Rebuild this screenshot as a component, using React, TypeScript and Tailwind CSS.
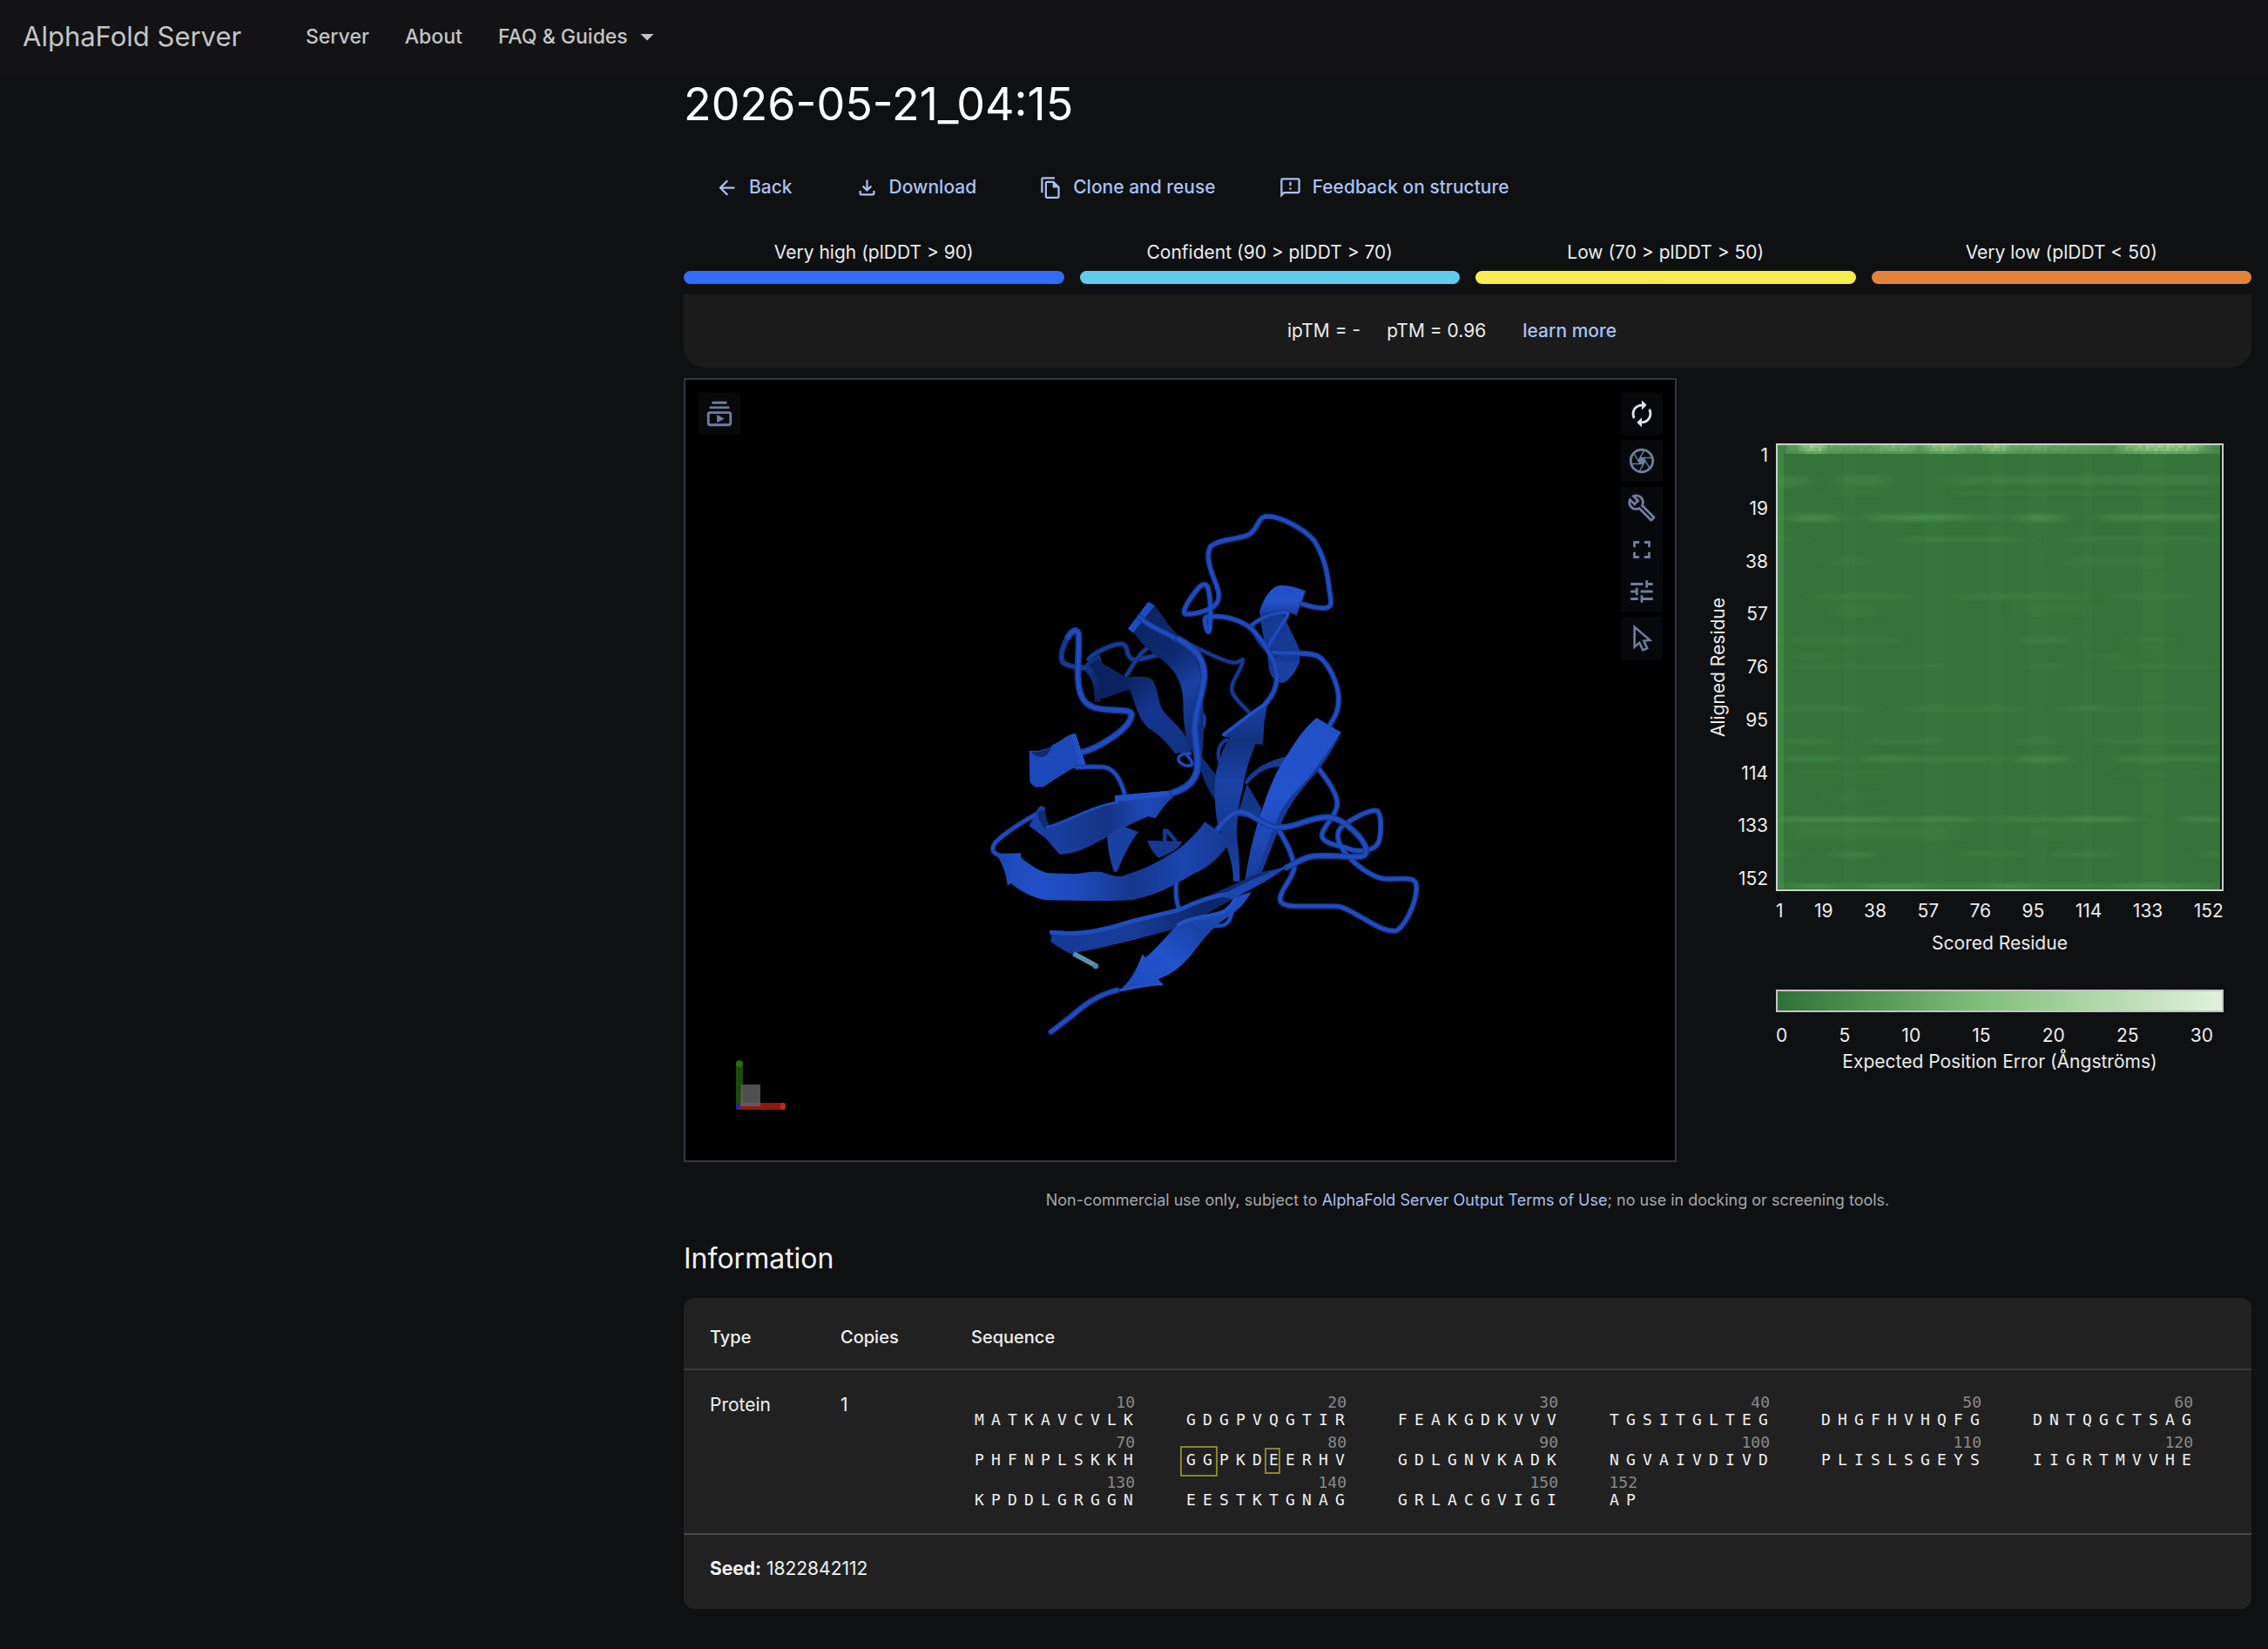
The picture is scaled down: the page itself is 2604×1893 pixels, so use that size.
import { type ReactNode } from "react";
import {
  MdArrowBack,
  MdArrowDropDown,
  MdAutorenew,
  MdFullscreen,
  MdOutlineBuild,
  MdOutlineCamera,
  MdOutlineFeedback,
  MdOutlineFileCopy,
  MdOutlineFileDownload,
  MdOutlineSubscriptions,
  MdTune,
} from "react-icons/md";

function Header() {
  return (
    <header className="flex h-[90px] items-center bg-[#131315] pl-[26px] pb-[6px] text-[#c4c4c4]">
      <a href="#home" className="w-[325px] text-[31px] leading-10">AlphaFold Server</a>
      <nav className="flex items-center gap-[41px] text-[23px] font-medium leading-8">
        <a href="#server">Server</a>
        <a href="#about">About</a>
        <button type="button" className="flex items-center">
          FAQ &amp; Guides
          <MdArrowDropDown className="ml-1 size-9" aria-hidden />
        </button>
      </nav>
    </header>
  );
}

function Action({ icon, children }: { icon: ReactNode; children: ReactNode }) {
  return (
    <button type="button" className="flex items-center gap-3 text-[21px] font-medium leading-7 text-[#a9c1f1]">
      {icon}
      {children}
    </button>
  );
}

function Actions() {
  return (
    <div className="mt-8 flex h-[66px] items-center gap-[72px] pl-9">
      <Action icon={<MdArrowBack className="size-[27px]" />}>Back</Action>
      <Action icon={<MdOutlineFileDownload className="size-[27px]" />}>Download</Action>
      <Action icon={<MdOutlineFileCopy className="size-[27px]" />}>Clone and reuse</Action>
      <Action icon={<MdOutlineFeedback className="size-[27px]" />}>Feedback on structure</Action>
    </div>
  );
}

const LEVELS = [
  { label: "Very high (plDDT > 90)", bar: "bg-[#336cf7]" },
  { label: "Confident (90 > plDDT > 70)", bar: "bg-[#61cbee]" },
  { label: "Low (70 > plDDT > 50)", bar: "bg-[#f6ec50]" },
  { label: "Very low (plDDT < 50)", bar: "bg-[#e28438]" },
];

function Legend() {
  return (
    <ul className="mt-[26px] grid grid-cols-4 gap-[18px]">
      {LEVELS.map((l) => (
        <li key={l.label} className="text-center text-[21px] leading-8 text-[#ececec]">
          {l.label}
          <div className={"mt-[5px] h-[15px] rounded-full " + l.bar} />
        </li>
      ))}
    </ul>
  );
}

function CursorIcon() {
  return (
    <svg viewBox="0 0 24 24" className="size-[34px]" fill="none" stroke="currentColor" strokeWidth="1.8" aria-hidden>
      <path d="M6.1 2.6v16.2l4-3.4 2.8 6 3.5-1.6-2.8-5.8 5-.7z" />
    </svg>
  );
}

function Tool({ label, active, children }: { label: string; active?: boolean; children: ReactNode }) {
  return (
    <button
      type="button"
      aria-label={label}
      className={"flex size-12 items-center justify-center bg-[#07080c] " + (active ? "text-[#dfe2e8]" : "text-[#6d7e9f]")}
    >
      {children}
    </button>
  );
}

function Tube({ d, w = 20, dark = false }: { d: string; w?: number; dark?: boolean }) {
  return (
    <g fill="none" strokeLinecap="round" strokeLinejoin="round">
      <path d={d} stroke={dark ? "#0e2a72" : "#163892"} strokeWidth={w} />
      <path d={d} stroke={dark ? "#143588" : "#1b45ae"} strokeWidth={w * 0.72} />
      <path d={d} stroke={dark ? "#173b94" : "#204dc0"} strokeWidth={w * 0.4} />
    </g>
  );
}

function Protein() {
  return (
    <svg viewBox="787 436 1136 896" className="block h-auto w-full" role="img" aria-label="Predicted structure">
      <defs>
        <linearGradient id="g1" x1="0" y1="0" x2="0.3" y2="1">
          <stop offset="0" stopColor="#0b2360" />
          <stop offset="0.45" stopColor="#0d2a70" />
          <stop offset="0.7" stopColor="#1940a2" />
          <stop offset="1" stopColor="#102e7c" />
        </linearGradient>
        <linearGradient id="g2" x1="0" y1="0" x2="1" y2="1">
          <stop offset="0" stopColor="#16398f" />
          <stop offset="0.3" stopColor="#0b215c" />
          <stop offset="0.6" stopColor="#143690" />
          <stop offset="1" stopColor="#12317f" />
        </linearGradient>
        <linearGradient id="g3" x1="0" y1="0" x2="1" y2="0">
          <stop offset="0" stopColor="#1c48b6" />
          <stop offset="0.18" stopColor="#2150c8" />
          <stop offset="0.35" stopColor="#1d4abb" />
          <stop offset="0.58" stopColor="#15378e" />
          <stop offset="0.8" stopColor="#1b45ae" />
          <stop offset="1" stopColor="#15388f" />
        </linearGradient>
        <linearGradient id="g4" x1="0" y1="0" x2="0" y2="1">
          <stop offset="0" stopColor="#1a43a8" />
          <stop offset="0.22" stopColor="#12317f" />
          <stop offset="0.45" stopColor="#1a42a6" />
          <stop offset="0.75" stopColor="#15378d" />
          <stop offset="1" stopColor="#1b44aa" />
        </linearGradient>
        <linearGradient id="g5" x1="0" y1="0" x2="0" y2="1">
          <stop offset="0" stopColor="#2150c8" />
          <stop offset="0.5" stopColor="#2352cd" />
          <stop offset="1" stopColor="#183c9a" />
        </linearGradient>
        <linearGradient id="g6" x1="0" y1="0" x2="1" y2="0">
          <stop offset="0" stopColor="#1a43aa" />
          <stop offset="0.55" stopColor="#143486" />
          <stop offset="0.8" stopColor="#1d49b8" />
          <stop offset="1" stopColor="#1a42a6" />
        </linearGradient>
        <linearGradient id="g7" x1="0" y1="1" x2="1" y2="0">
          <stop offset="0" stopColor="#1c49b8" />
          <stop offset="0.35" stopColor="#2253cd" />
          <stop offset="0.6" stopColor="#1a43a8" />
          <stop offset="1" stopColor="#2150c4" />
        </linearGradient>
        <linearGradient id="g8" x1="0" y1="0" x2="1" y2="0">
          <stop offset="0" stopColor="#163a94" />
          <stop offset="0.35" stopColor="#173c98" />
          <stop offset="0.65" stopColor="#0d2767" />
          <stop offset="0.9" stopColor="#102c76" />
        </linearGradient>
      </defs>
      <rect x="787" y="436" width="1136" height="896" fill="#000" />
      <g transform="translate(1100 570) scale(0.33333)">
        {/* distant strands and loops */}
        <Tube dark w={18} d="M450 560 C470 535 540 505 565 508 C590 512 575 550 600 560 C625 565 660 552 690 545" />
        <Tube dark w={16} d="M580 615 C600 590 620 540 655 520" />
        <Tube dark w={15} d="M800 510 C860 540 930 575 955 572 C975 570 985 550 980 570 C970 610 935 640 945 675 C955 700 985 725 1000 740" />
        <Tube w={12} d="M800 885 C775 880 755 895 760 910 C775 930 800 930 806 922 C806 905 790 895 785 888" />
        <Tube dark w={14} d="M925 838 C900 850 890 880 900 910" />
        <path d="M830 880 C860 930 890 950 900 985 L915 1150 L885 1045 C860 1010 845 970 830 930 Z" fill="#0f2b74" />
        <path d="M845 740 C860 760 855 790 845 805 Z" fill="#1a42a6" />
        <path d="M440 575 L487 543 L497 575 C520 590 550 605 580 623 C615 618 650 618 665 628 C690 650 685 700 705 735 C730 770 770 790 805 862 L800 880 L748 885 C720 850 700 825 660 800 C620 770 615 720 590 665 C560 668 530 690 492 697 L488 707 L470 707 C472 650 460 620 428 592 Z" fill="url(#g2)" />
        <path d="M485 560 L497 575 L580 623 L590 665 L495 695 C495 650 470 600 450 580 Z" fill="#0b2260" />
        <path d="M605 468 L675 375 C700 400 720 440 750 470 C800 515 832 560 840 640 C842 720 852 780 840 900 L808 880 C785 850 775 790 775 700 C775 640 740 590 700 560 C660 535 625 500 605 468 Z" fill="url(#g1)" />
        <path d="M585 455 L655 362 L677 375 L603 470 Z" fill="#1f4dc0" />
        <path d="M995 990 L1045 1075 L1040 1110 L962 1100 Z" fill="#143588" />
        <path d="M985 985 C1020 930 1080 905 1140 893 L1120 930 C1080 928 1040 940 995 992 Z" fill="#163a92" />

        {/* helix turn */}
        <path d="M1040 403 C1060 398 1100 395 1120 400 C1130 440 1165 490 1178 535 L1176 572 C1160 600 1140 625 1118 642 C1095 640 1075 620 1070 590 C1070 540 1045 480 1040 403 Z" fill="#163a94" />
        <path d="M1085 560 C1120 575 1155 575 1178 560 C1165 605 1140 635 1118 642 C1090 630 1080 600 1085 560 Z" fill="#1940a2" />
        <path d="M1037 403 C1050 350 1080 308 1110 306 C1140 304 1170 315 1197 325 C1190 350 1175 380 1167 410 L1140 398 C1100 392 1060 402 1037 403 Z" fill="url(#g5)" />
        <Tube dark w={18} d="M1010 445 C1030 490 1060 535 1095 545" />
        <Tube w={16} d="M1012 443 C1050 410 1110 395 1135 400 C1142 412 1085 475 1068 520" />
        <Tube w={19} d="M1085 537 C1150 540 1210 536 1240 550 C1280 575 1310 650 1311 695 C1311 735 1300 755 1282 785" />
        <Tube w={19} d="M1185 370 C1210 378 1235 386 1262 384 S1287 365 1280 330 C1273 265 1262 205 1225 150 C1190 110 1110 68 1065 68 C1030 68 1035 115 1000 132 C960 150 900 145 870 172 C850 205 870 255 890 305 C905 345 900 370 870 385 C840 400 810 405 785 405 C765 400 800 350 820 325 C835 305 850 295 860 312 C870 340 870 400 868 440 C868 475 858 470 853 445 C846 415 852 412 870 412 C930 412 980 430 1010 455 C1050 495 1100 570 1098 625 C1097 665 1080 690 1060 712" />

        {/* left side */}
        <Tube dark w={20} d="M378 485 C360 515 350 550 360 570 C375 585 420 590 440 590" />
        <Tube w={23} d="M420 882 C460 875 510 845 545 820 C580 795 600 765 597 748 C593 728 500 742 465 725 C425 712 415 670 413 620 C412 560 418 500 415 475 C410 450 390 465 378 485" />
        <path d="M245 875 L275 876 L318 865 L325 855 C345 848 370 825 392 818 L405 817 L442 930 C420 935 400 930 380 945 C345 965 320 985 293 1000 L265 1001 L247 983 Z" fill="#1c49b9" />
        <path d="M252 878 C270 885 300 872 320 868 C312 885 300 898 285 897 C270 895 258 888 252 878 Z" fill="#0f2a70" />
        <path d="M390 818 L405 817 L442 930 L420 934 Z" fill="#2150c4" />
        <Tube w={17} d="M410 933 C450 930 490 928 515 935 C550 950 565 990 575 1030" />
        <Tube w={17} d="M285 1085 C230 1115 165 1155 130 1190 C115 1210 115 1225 140 1235" />
        <path d="M245 1135 L272 1080 L283 1065 L300 1070 C300 1095 308 1120 308 1138 C380 1120 460 1070 540 1050 L540 1030 L745 1012 L742 1035 C715 1055 700 1080 680 1108 L655 1102 C620 1115 560 1145 515 1172 C460 1200 410 1232 350 1232 C325 1205 310 1185 300 1175 Z" fill="url(#g6)" />
        <path d="M275 1085 L298 1078 C300 1100 308 1122 318 1138 L300 1145 C285 1128 276 1108 275 1085 Z" fill="#0f2b74" />
        <path d="M540 1030 L745 1012 L742 1028 C680 1038 600 1045 540 1050 Z" fill="#2250c8" />
        <path d="M302 1140 C380 1120 460 1065 556 1052" stroke="#1e4abb" strokeWidth="9" fill="none" />
        <path d="M514 1172 C535 1155 555 1140 575 1138 L621 1155 C600 1180 570 1235 548 1292 L537 1292 C525 1260 515 1210 514 1172 Z" fill="#1941a2" />
        <Tube dark w={15} d="M712 1185 L712 1150 C722 1150 735 1168 748 1185" />
        <path d="M652 1185 L772 1188 C765 1205 750 1215 735 1225 L690 1245 C675 1230 660 1210 652 1185 Z" fill="#16398f" />

        {/* central strands */}
        <path d="M915 822 C960 790 1010 750 1067 708 L1055 775 L1050 855 L1025 852 C1000 910 985 970 980 1010 C965 1060 962 1110 960 1160 C965 1220 972 1260 970 1325 L948 1325 C948 1260 925 1200 900 1150 C885 1100 880 1020 888 950 C900 900 915 860 935 830 L920 828 Z" fill="url(#g4)" />
        <path d="M915 820 C960 785 1010 745 1065 709" stroke="#2150c4" strokeWidth="12" fill="none" strokeLinecap="round" />
        <Tube w={20} d="M625 415 C650 445 710 465 750 490 C820 525 850 560 848 620" />
        <Tube w={26} d="M760 492 C820 525 850 560 847 625 C840 690 815 740 815 800 C818 850 830 900 823 945 C810 995 770 1010 740 1020" />
        <Tube w={19} d="M1240 935 C1280 985 1305 1030 1306 1055 C1306 1100 1260 1130 1253 1165 C1255 1200 1320 1200 1360 1218 C1420 1225 1445 1210 1452 1180 C1460 1130 1455 1085 1442 1082 C1415 1075 1330 1125 1315 1145 C1300 1165 1310 1200 1340 1235 C1375 1275 1430 1312 1465 1316 C1500 1320 1530 1312 1560 1318 C1585 1325 1580 1350 1575 1380 C1560 1440 1530 1485 1510 1495 C1480 1500 1450 1485 1400 1455 C1370 1440 1330 1410 1300 1411 L1160 1411 C1125 1410 1105 1400 1110 1380 C1120 1340 1150 1320 1158 1280 C1155 1240 1130 1190 1108 1155" />
        <path d="M1235 762 L1320 812 C1290 870 1260 920 1230 955 C1180 1010 1140 1060 1110 1130 C1085 1190 1065 1250 1040 1310 L988 1325 C1000 1240 1020 1150 1055 1055 C1080 980 1110 920 1140 880 C1170 830 1200 790 1235 762 Z" fill="url(#g5)" />
        <path d="M1320 812 C1290 870 1260 920 1230 955 C1180 1010 1140 1060 1110 1130 C1085 1190 1065 1250 1040 1310 L1025 1310 C1050 1240 1075 1170 1108 1090 C1140 1030 1192 990 1218 955 C1252 910 1287 860 1315 815 Z" fill="#163a94" />
        <Tube w={22} d="M895 1145 C920 1110 950 1085 975 1086 C1015 1090 1040 1130 1095 1139 C1160 1145 1200 1105 1275 1104 C1330 1108 1400 1180 1406 1215 C1408 1240 1390 1242 1360 1241 C1310 1240 1260 1232 1215 1240 C1180 1248 1150 1270 1130 1278" />
        <path d="M130 1230 L216 1228 L218 1245 C250 1270 280 1290 310 1297 L400 1300 C440 1295 470 1288 495 1293 C530 1305 555 1315 580 1302 C640 1285 700 1255 765 1210 C800 1180 830 1150 850 1120 L940 1185 C910 1235 860 1280 810 1300 C740 1345 670 1375 600 1390 C520 1395 400 1392 300 1390 C250 1380 210 1355 182 1332 L170 1340 C165 1290 150 1260 130 1230 Z" fill="url(#g3)" />
        <Tube w={17} d="M752 1330 C748 1370 752 1395 760 1418" />

        {/* lower strands */}
        <Tube w={15} d="M875 1478 C920 1484 935 1470 944 1432" />
        <Tube dark w={15} d="M325 1528 C345 1545 370 1560 398 1572" />
        <path d="M318 1500 C420 1510 480 1500 600 1460 L760 1420 C880 1370 980 1320 1040 1295 L1135 1272 C1090 1310 1020 1345 950 1385 C880 1420 860 1440 760 1486 C600 1530 480 1560 390 1573 L325 1535 Z" fill="url(#g8)" />
        <path d="M550 1702 C590 1680 620 1620 635 1575 L645 1588 C690 1550 720 1510 755 1475 C800 1440 870 1440 910 1425 C930 1415 940 1400 950 1380 L1010 1362 C990 1400 960 1430 920 1455 C880 1480 840 1530 810 1570 C780 1610 740 1645 690 1662 L705 1680 L550 1702 Z" fill="url(#g7)" />
        <path d="M755 1477 C800 1446 870 1449 910 1432 C930 1422 945 1404 955 1385" stroke="#2250c6" strokeWidth="13" fill="none" />
        <path d="M322 1501 C420 1511 480 1500 600 1462 L760 1424 C830 1390 880 1375 935 1368" stroke="#1f4cbe" strokeWidth="15" fill="none" strokeLinecap="round" />
        <path d="M905 1376 C980 1330 1060 1298 1135 1272 C1090 1310 1020 1350 940 1386 Z" fill="#1b46b0" />
        <path d="M552 1702 C600 1695 650 1680 705 1680" stroke="#2553cc" strokeWidth="7" fill="none" />
        <Tube w={20} d="M548 1700 C480 1715 430 1755 390 1790 C365 1810 340 1828 320 1844" />
        <path d="M398 1574 L472 1614" stroke="#5a94ad" strokeWidth="17" strokeLinecap="butt" fill="none" />
        <circle cx="474" cy="1617" r="10" fill="#4d8298" />
      </g>

      {/* orientation axes */}
      <rect x="845" y="1217" width="8" height="54" rx="4" fill="#1c4a0c" />
      <rect x="845" y="1218" width="8" height="7" rx="3" fill="#2c6a1c" />
      <rect x="849" y="1266" width="52" height="8" fill="#8f1a10" />
      <rect x="896" y="1266" width="6" height="8" rx="3" fill="#c02a1c" />
      <path d="M851 1245 H873 V1270 H850 Z" fill="#646464" fillOpacity="0.8" />
      <rect x="845" y="1267" width="5" height="7" rx="2" fill="#2424b4" />
    </svg>
  );
}

function Viewer() {
  return (
    <section className="relative w-[1140px] shrink-0 border-2 border-[#343643] bg-black">
      <Protein />
      <div className="absolute left-[15px] top-[15px]">
        <Tool label="Animate"><MdOutlineSubscriptions className="size-[34px]" /></Tool>
      </div>
      <div className="absolute right-[14px] top-[15px] flex flex-col gap-[6px]">
        <Tool label="Reset zoom" active><MdAutorenew className="size-[34px]" /></Tool>
        <Tool label="Screenshot"><MdOutlineCamera className="size-[34px]" /></Tool>
        <div>
          <Tool label="Controls"><MdOutlineBuild className="size-[34px]" /></Tool>
          <Tool label="Expand"><MdFullscreen className="size-[34px]" /></Tool>
          <Tool label="Settings"><MdTune className="size-[34px]" /></Tool>
        </div>
        <Tool label="Selection mode"><CursorIcon /></Tool>
      </div>
    </section>
  );
}

const TICKS = ["1", "19", "38", "57", "76", "95", "114", "133", "152"];

/* x, y, width, height, opacity of the lighter streaks */
const STREAKS: [number, number, number, number, number][] = [
  [0, 36, 30, 12, 0.3], [70, 34, 60, 14, 0.18], [200, 34, 190, 13, 0.16], [390, 34, 124, 13, 0.18],
  [60, 54, 60, 4, 0.12], [200, 54, 310, 4, 0.1],
  [16, 80, 50, 8, 0.45], [104, 80, 60, 8, 0.36], [155, 80, 60, 7, 0.45], [210, 80, 50, 7, 0.18], [280, 80, 48, 8, 0.45],
  [375, 80, 139, 7, 0.36], [0, 107, 20, 4, 0.2], [140, 107, 140, 4, 0.26], [330, 107, 184, 4, 0.22],
  [60, 128, 50, 12, 0.08], [330, 128, 110, 14, 0.08],
  [50, 173, 100, 4, 0.26], [205, 173, 145, 4, 0.26], [390, 173, 90, 4, 0.24], [60, 182, 60, 18, 0.06], [280, 182, 80, 16, 0.06],
  [10, 222, 130, 7, 0.12], [280, 222, 60, 7, 0.18], [400, 222, 60, 6, 0.1],
  [10, 240, 60, 8, 0.08], [370, 240, 40, 10, 0.08],
  [10, 254, 190, 3, 0.18], [290, 254, 50, 4, 0.18], [380, 254, 134, 3, 0.16],
  [0, 302, 100, 5, 0.22], [150, 302, 130, 5, 0.2], [330, 302, 60, 5, 0.24], [400, 302, 100, 5, 0.14],
  [10, 339, 50, 7, 0.2], [105, 339, 90, 6, 0.16], [280, 339, 40, 7, 0.18], [370, 339, 140, 6, 0.16],
  [10, 360, 60, 6, 0.3], [100, 360, 60, 6, 0.32], [168, 360, 90, 6, 0.22], [278, 360, 56, 7, 0.36], [390, 360, 120, 6, 0.26],
  [10, 378, 140, 3, 0.1], [400, 378, 100, 6, 0.08],
  [0, 431, 135, 4, 0.6], [148, 431, 80, 4, 0.5], [250, 431, 90, 4, 0.35], [335, 431, 75, 4, 0.6], [470, 431, 44, 4, 0.55],
  [10, 438, 200, 20, 0.1], [60, 400, 50, 14, 0.05], [290, 440, 60, 16, 0.07],
  [0, 471, 20, 5, 0.3], [65, 471, 45, 5, 0.34], [205, 471, 80, 4, 0.2], [320, 471, 70, 5, 0.24], [490, 471, 24, 5, 0.25],
  [0, 508, 514, 4, 0.35], [30, 508, 30, 5, 0.5], [100, 508, 70, 5, 0.4], [250, 508, 40, 5, 0.4], [400, 508, 70, 5, 0.4],
];

const TOP_LIGHTS: [number, number, number][] = [
  [14, 12, 1], [47, 22, 0.6], [67, 18, 0.85], [88, 14, 0.85], [105, 14, 0.45], [155, 34, 1], [165, 14, 0.8], [28, 60, 0.35], [90, 90, 0.4],
];

function topLight(i: number, row: number) {
  const x = (i / 152) * 180;
  const glow = TOP_LIGHTS.reduce((m, [c, w, a]) => Math.max(m, a * Math.max(0, 1 - Math.pow((x - c) / (w * 0.62), 2))), 0);
  const noise = 0.8 + 0.2 * Math.sin(i * 2.7 + row * 1.3) * Math.cos(i * 0.9);
  return i < 3 ? 0 : glow * noise * [0.9, 0.75, 0.4][row];
}

function Heatmap() {
  return (
    <svg viewBox="0 0 514 514" className="block h-auto w-full border-2 border-[#c9d2c9]" role="img" aria-label="Predicted aligned error">
      <defs>
        <filter id="soft" x="-20%" y="-200%" width="140%" height="500%">
          <feGaussianBlur stdDeviation="12 2" />
        </filter>
      </defs>
      <rect width="514" height="514" fill="#34743a" />
      <g fill="#5fa564">
        <rect x="0" y="0" width="7" height="513" opacity="0.35" />
        <rect x="76" y="10" width="14" height="500" opacity="0.05" />
        <rect x="170" y="10" width="22" height="500" opacity="0.05" />
        <rect x="246" y="10" width="14" height="500" opacity="0.05" />
        <rect x="292" y="10" width="20" height="500" opacity="0.05" />
        <rect x="352" y="10" width="12" height="500" opacity="0.05" />
        <rect x="422" y="10" width="26" height="500" opacity="0.06" />
        <g filter="url(#soft)">
          {STREAKS.map(([x, y, w, h, o], i) => (
            <rect key={i} x={x} y={y} width={w} height={h} opacity={o} />
          ))}
        </g>
      </g>
      <rect x="8" y="0" width="506" height="10" fill="#519a57" opacity="0.6" />
      {[0, 1, 2].map((row) =>
        Array.from({ length: 152 }, (_, i) => (
          <rect key={row + "-" + i} x={i * 3.382} y={row * 3.4} width="3.5" height="3.5" fill="#b4e09c" opacity={topLight(i, row)} />
        )),
      )}
      <rect x="512" y="0" width="2" height="514" fill="#0e1012" />
    </svg>
  );
}

function ErrorChart() {
  return (
    <section className="mt-[75px] grid flex-1 grid-cols-[24px_45px_1fr] self-start pl-9 pr-8 text-[21px] leading-7 text-[#ececec]">
      <div className="flex items-center justify-center">
        <span className="rotate-180 whitespace-nowrap [writing-mode:vertical-rl]">Aligned Residue</span>
      </div>
      <div className="flex flex-col items-end justify-between">
        {TICKS.map((t) => <span key={t}>{t}</span>)}
      </div>
      <div className="ml-[9px]">
        <Heatmap />
      </div>
      <div className="col-start-3 ml-[9px]">
        <div className="mt-[9px] flex justify-between">
          {TICKS.map((t) => <span key={t}>{t}</span>)}
        </div>
        <p className="mt-[9px] text-center">Scored Residue</p>
        <div className="mt-[39px] h-[26px] border-2 border-[#c4c4c4] bg-linear-to-r from-[#2f7137] via-[#7fbe79] via-45% to-[#e2f1dd]" />
        <div className="mt-[13px] flex justify-between pr-3">
          {["0", "5", "10", "15", "20", "25", "30"].map((t) => <span key={t}>{t}</span>)}
        </div>
        <p className="mt-[2px] text-center">Expected Position Error (Ångströms)</p>
      </div>
    </section>
  );
}

const GROUPS = [
  "MATKAVCVLK", "GDGPVQGTIR", "FEAKGDKVVV", "TGSITGLTEG", "DHGFHVHQFG", "DNTQGCTSAG",
  "PHFNPLSKKH", "GGPKDEERHV", "GDLGNVKADK", "NGVAIVDIVD", "PLISLSGEYS", "IIGRTMVVHE",
  "KPDDLGRGGN", "EESTKTGNAG", "GRLACGVIGI", "AP",
];

function Group({ letters, end, marked }: { letters: string; end: number; marked: boolean }) {
  return (
    <div className="w-fit">
      <div className="pr-[2px] text-right text-[#8a8a8a]">{end}</div>
      <div className="relative flex">
        {letters.split("").map((c, i) => (
          <span key={i} className="w-[19px] text-center">{c}</span>
        ))}
        {marked && (
          <>
            <span className="absolute -left-[3px] -top-[6px] h-[35px] w-[43px] border-2 border-[#86852f]" />
            <span className="absolute left-[94px] -top-[4px] h-[30px] w-[18px] border-2 border-[#86852f]" />
          </>
        )}
      </div>
    </div>
  );
}

function InfoTable() {
  return (
    <div className="mt-[25px] overflow-hidden rounded-xl bg-[#212121] text-[21px] leading-7 text-[#f0f0f0]">
      <table className="w-full border-collapse text-left">
        <thead>
          <tr className="h-[82px] border-b-2 border-[#383838] text-[20px]">
            <th className="w-[180px] pt-[9px] pl-[30px] font-medium">Type</th>
            <th className="w-[150px] pt-[9px] font-medium">Copies</th>
            <th className="pt-[9px] font-medium">Sequence</th>
          </tr>
        </thead>
        <tbody>
          <tr className="border-b-2 border-[#484848] align-top">
            <td className="pt-[26px] pl-[30px]">Protein</td>
            <td className="pt-[26px]">1</td>
            <td className="pt-[27px] pb-[28px]">
              <div className="grid grid-cols-[repeat(6,190px)] gap-x-[53px] gap-y-[6px] font-['DejaVu_Sans_Mono',monospace] text-[18px] leading-5">
                {GROUPS.map((g, i) => (
                  <Group key={i} letters={g} end={i * 10 + g.length} marked={i === 7} />
                ))}
              </div>
            </td>
          </tr>
          <tr className="h-[86px]">
            <td colSpan={3} className="pb-[8px] pl-[30px]"><b>Seed:</b> 1822842112</td>
          </tr>
        </tbody>
      </table>
    </div>
  );
}

export default function App() {
  return (
    <div className="min-h-screen bg-[#0e1012] font-['Inter',sans-serif]">
      <Header />
      <main className="mr-[19px] ml-[785px] pb-[46px]">
        <h1 className="text-[52px] leading-[60px] text-white">2026-05-21_04:15</h1>
        <Actions />
        <Legend />
        <div className="mt-3 flex h-[84px] items-center justify-center gap-[30px] rounded-b-3xl bg-[#1b1b1b] pr-9 text-[21px] text-[#ececec]">
          <span>ipTM = -</span>
          <span>pTM = 0.96</span>
          <a href="#learn" className="ml-3 font-medium text-[#a9c1f1]">learn more</a>
        </div>
        <div className="mt-3 flex">
          <Viewer />
          <ErrorChart />
        </div>
        <p className="mt-[30px] text-center text-[18px] leading-7 text-[#a8a8a8]">
          Non-commercial use only, subject to <a href="#terms" className="text-[#a9c1f1]">AlphaFold Server Output Terms of Use</a>; no use in docking or screening tools.
        </p>
        <h2 className="mt-[33px] text-[32px] leading-10 text-[#f0f0f0]">Information</h2>
        <InfoTable />
      </main>
    </div>
  );
}
